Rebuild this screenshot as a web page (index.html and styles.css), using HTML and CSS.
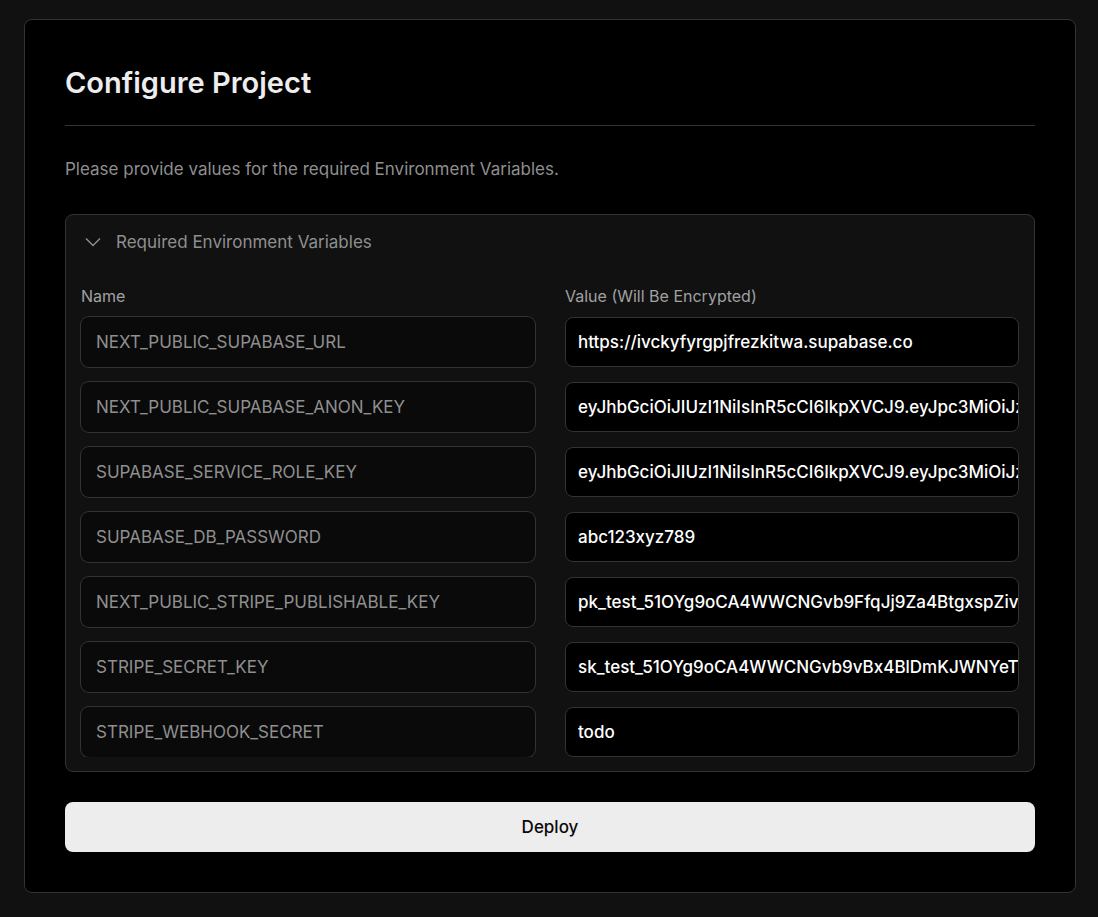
FILE: index.html
```html
<!DOCTYPE html>
<html lang="en">
<head>
<meta charset="utf-8">
<meta name="viewport" content="width=device-width, initial-scale=1">
<title>Configure Project</title>
<link rel="stylesheet" href="styles.css">
</head>
<body>
<main class="card">
  <h1 class="title">Configure Project</h1>
  <p class="intro">Please provide values for the required Environment Variables.</p>
  <form class="form">
    <section class="panel">
      <button class="panel-toggle" type="button" aria-expanded="true" aria-controls="env">
        <svg class="chevron" viewBox="0 0 16 16" aria-hidden="true"><path d="M1 4.5 8 11.5 15 4.5"/></svg>
        <span>Required Environment Variables</span>
      </button>
      <div id="env">
        <div class="columns">
          <label class="label" id="name-label" for="name-1">Name</label>
          <label class="label" id="value-label" for="value-1">Value (Will Be Encrypted)</label>
        </div>
        <div class="columns fields">
          <input class="field name" id="name-1" type="text" readonly value="NEXT_PUBLIC_SUPABASE_URL">
          <input class="field value" id="value-1" type="text" value="https://ivckyfyrgpjfrezkitwa.supabase.co">
          <input class="field name" aria-labelledby="name-label" type="text" readonly value="NEXT_PUBLIC_SUPABASE_ANON_KEY">
          <input class="field value" aria-labelledby="value-label" type="text" value="eyJhbGciOiJIUzI1NiIsInR5cCI6IkpXVCJ9.eyJpc3MiOiJz">
          <input class="field name" aria-labelledby="name-label" type="text" readonly value="SUPABASE_SERVICE_ROLE_KEY">
          <input class="field value" aria-labelledby="value-label" type="text" value="eyJhbGciOiJIUzI1NiIsInR5cCI6IkpXVCJ9.eyJpc3MiOiJz">
          <input class="field name" aria-labelledby="name-label" type="text" readonly value="SUPABASE_DB_PASSWORD">
          <input class="field value" aria-labelledby="value-label" type="text" value="abc123xyz789">
          <input class="field name" aria-labelledby="name-label" type="text" readonly value="NEXT_PUBLIC_STRIPE_PUBLISHABLE_KEY">
          <input class="field value" aria-labelledby="value-label" type="text" value="pk_test_51OYg9oCA4WWCNGvb9FfqJj9Za4BtgxspZiv">
          <input class="field name" aria-labelledby="name-label" type="text" readonly value="STRIPE_SECRET_KEY">
          <input class="field value" aria-labelledby="value-label" type="text" value="sk_test_51OYg9oCA4WWCNGvb9vBx4BlDmKJWNYeT">
          <input class="field name" aria-labelledby="name-label" type="text" readonly value="STRIPE_WEBHOOK_SECRET">
          <input class="field value" aria-labelledby="value-label" type="text" value="todo">
        </div>
      </div>
    </section>
    <button class="deploy" type="submit">Deploy</button>
  </form>
</main>
</body>
</html>
```
FILE: styles.css
```css
*, *::before, *::after {
  box-sizing: border-box;
}

body {
  margin: 0;
  padding: 19px 22px 24px 24px;
  background: #111;
  color: #ededed;
  font-family: Inter, "Liberation Sans", sans-serif;
  font-size: 17px;
  line-height: 24px;
}

.card {
  padding: 40px;
  border: 1px solid #333;
  border-radius: 8px;
  background: #000;
}

.title {
  margin: 0;
  padding: 5px 0 24px;
  border-bottom: 1px solid #333;
  font-size: 29px;
  font-weight: 600;
  line-height: 36px;
}

.intro {
  margin: 31px 0 33px;
  color: #8f8f8f;
}

.form {
  display: flex;
  flex-direction: column;
  gap: 30px;
}

.panel {
  padding: 15px 15px 14px;
  border: 1px solid #333;
  border-radius: 8px;
  background: #111;
}

.panel-toggle {
  display: flex;
  align-items: center;
  gap: 15px;
  width: 100%;
  margin-bottom: 30px;
  padding: 0 4px;
  border: 0;
  background: none;
  color: #8f8f8f;
  font: inherit;
}

.chevron {
  width: 16px;
  height: 16px;
  fill: none;
  stroke: currentColor;
  stroke-width: 1.4;
}

.columns {
  display: grid;
  grid-template-columns: 1fr 1fr;
  gap: 15px 30px;
}

.label {
  color: #a1a1a1;
  font-size: 16px;
}

.fields {
  margin-top: 8px;
  padding-top: 1px;
  overflow-y: clip;
}

.field {
  width: 100%;
  min-width: 0;
  height: 50px;
  border: 0;
  border-radius: 8px;
  outline: 0;
  font: inherit;
}

.name {
  padding: 0 15px;
  background: #0a0a0a;
  box-shadow: 0 0 0 1px #333;
  color: #8f8f8f;
}

.value {
  padding: 0 0 0 12px;
  border: 1px solid #333;
  background: #000;
  color: #fff;
  font-weight: 500;
}

.deploy {
  height: 50px;
  border: 0;
  border-radius: 8px;
  background: #ededed;
  color: #0a0a0a;
  font: inherit;
  font-weight: 500;
}
```
